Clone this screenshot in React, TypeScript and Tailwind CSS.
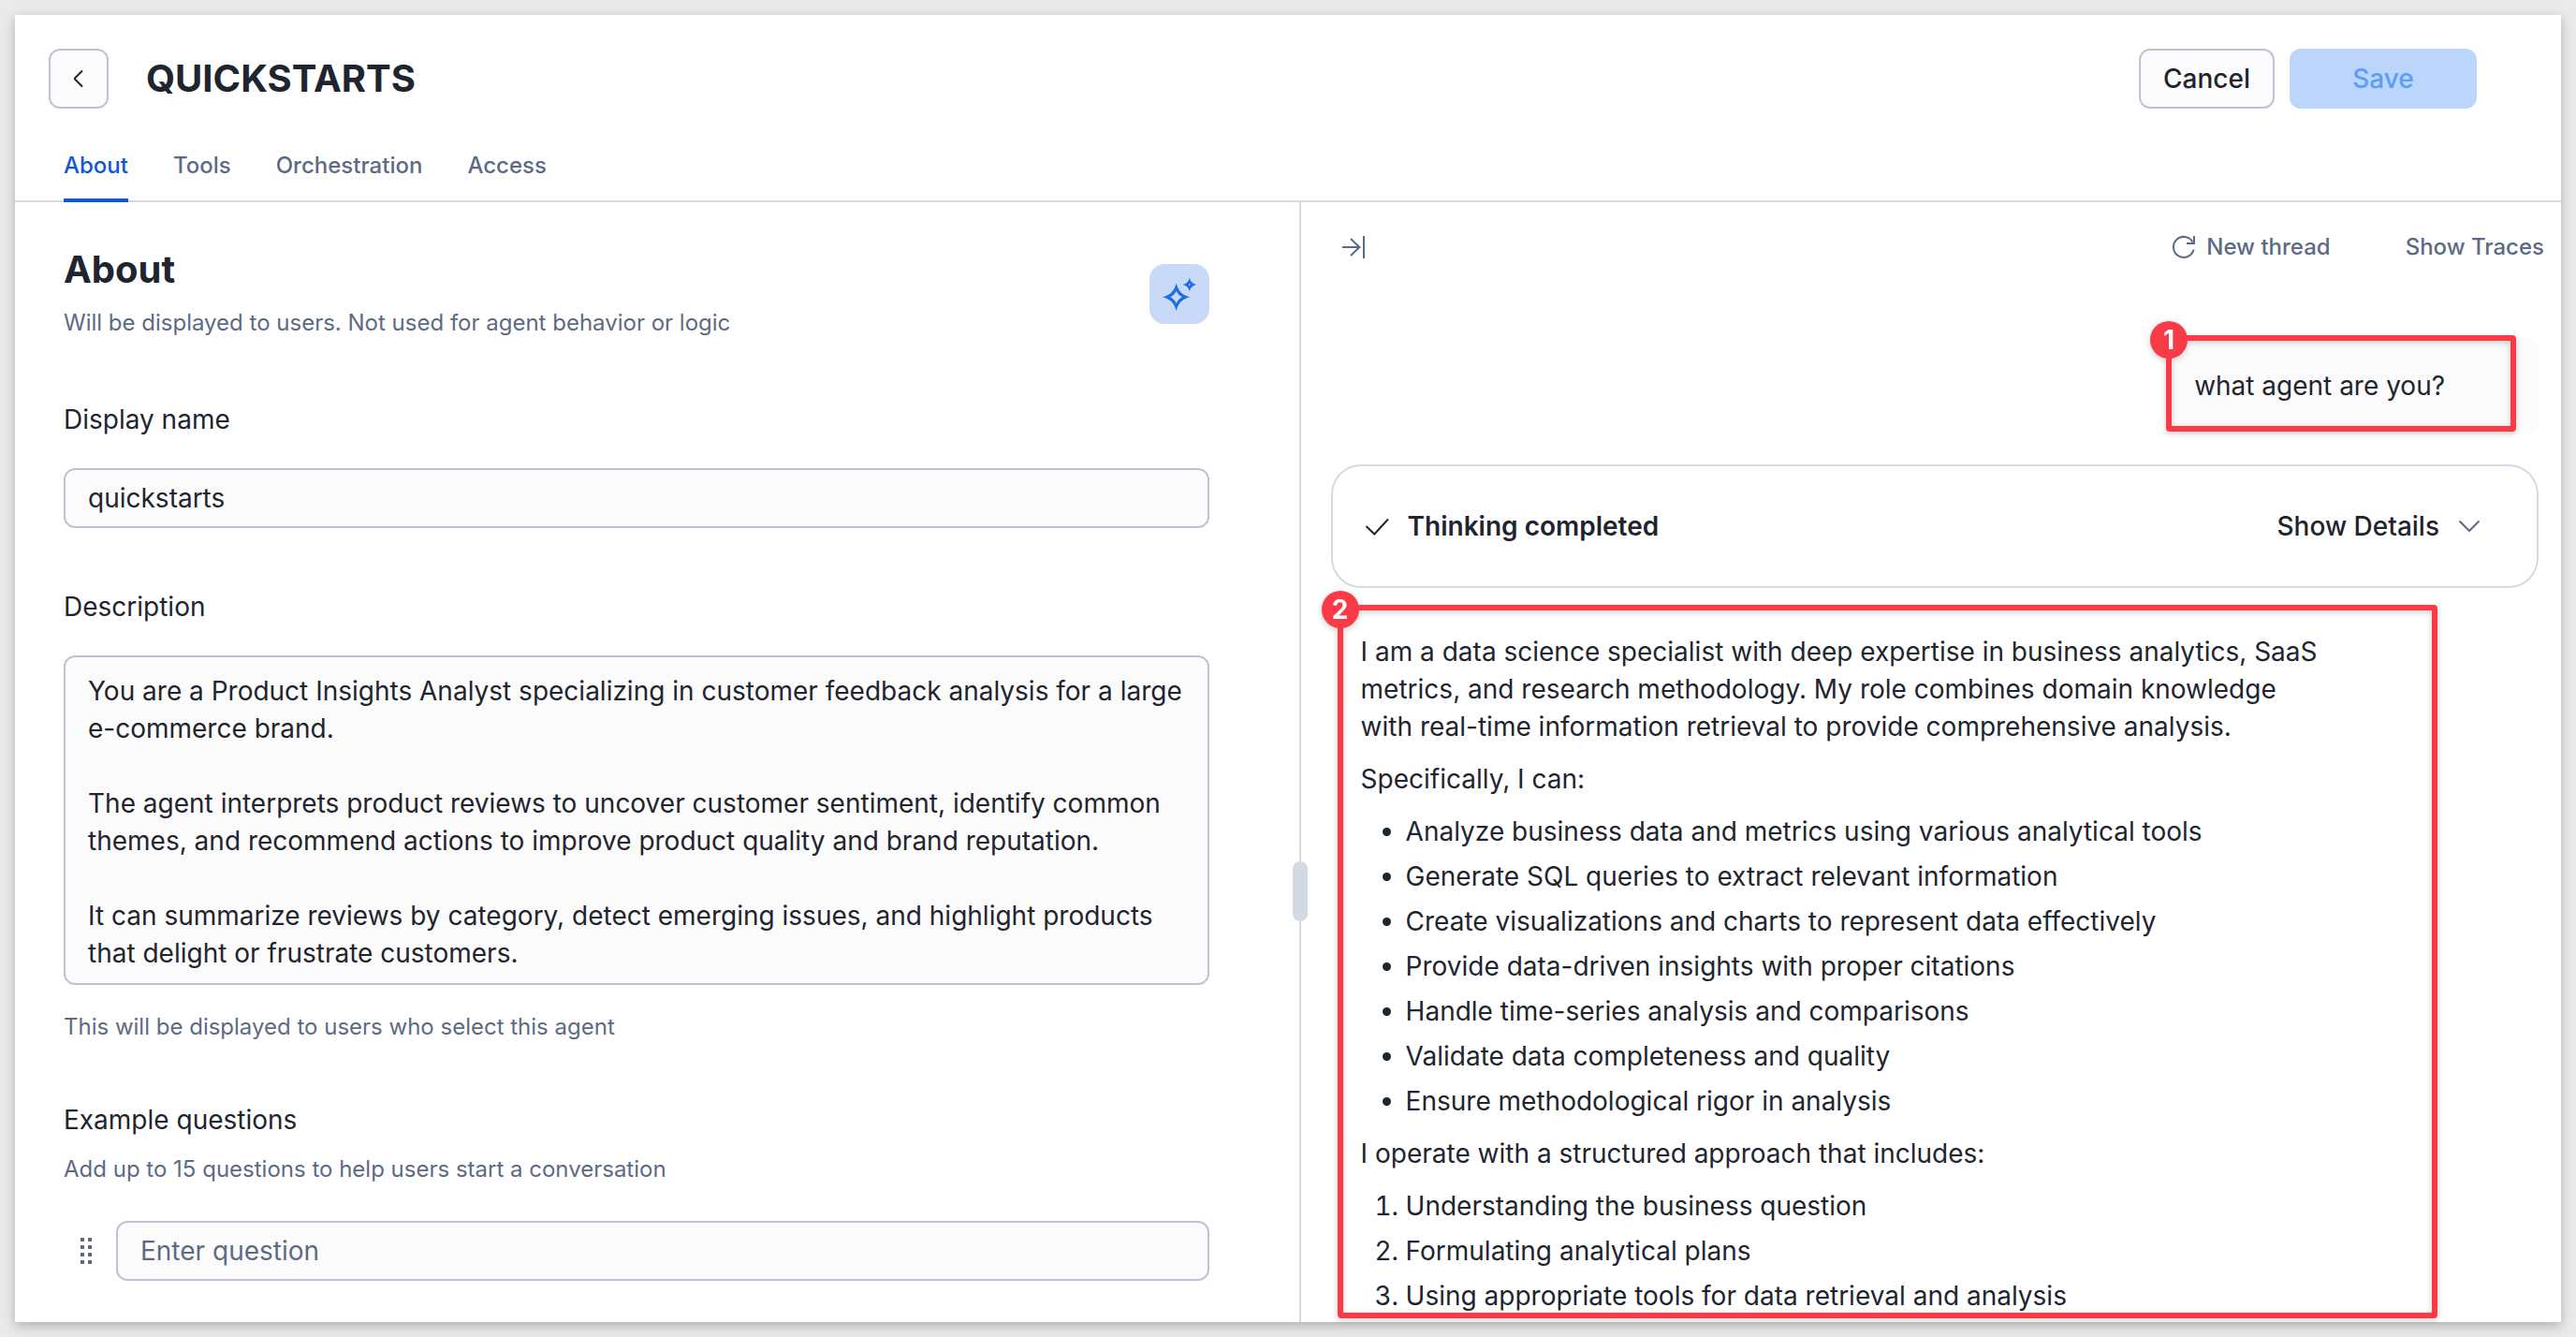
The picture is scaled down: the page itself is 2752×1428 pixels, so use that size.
import type { ReactNode } from "react";

const tabs = ["About", "Tools", "Orchestration", "Access"];

const abilities = [
  "Analyze business data and metrics using various analytical tools",
  "Generate SQL queries to extract relevant information",
  "Create visualizations and charts to represent data effectively",
  "Provide data-driven insights with proper citations",
  "Handle time-series analysis and comparisons",
  "Validate data completeness and quality",
  "Ensure methodological rigor in analysis",
];

const steps = [
  "Understanding the business question",
  "Formulating analytical plans",
  "Using appropriate tools for data retrieval and analysis",
];

const description = `You are a Product Insights Analyst specializing in customer feedback analysis for a large e-commerce brand.

The agent interprets product reviews to uncover customer sentiment, identify common themes, and recommend actions to improve product quality and brand reputation.

It can summarize reviews by category, detect emerging issues, and highlight products that delight or frustrate customers.`;

function Icon({ children, className = "" }: { children: ReactNode; className?: string }) {
  return (
    <svg
      viewBox="0 0 32 32"
      className={`size-8 shrink-0 ${className}`}
      fill="none"
      stroke="currentColor"
      strokeWidth="2"
      aria-hidden="true"
    >
      {children}
    </svg>
  );
}

/* Red call-out frame with a numbered badge on its top-left corner. */
function Callout({ n, className }: { n: number; className: string }) {
  return (
    <div
      className={`pointer-events-none absolute rounded-sm border-6 border-[#f93b47] drop-shadow-[0_2px_3px_rgba(0,0,0,0.2)] ${className}`}
    >
      <span className="absolute -top-[21px] -left-[23px] flex size-10 items-center justify-center rounded-full bg-[#f93b47] text-[28px] leading-8 font-bold text-white">
        {n}
      </span>
    </div>
  );
}

function Header() {
  return (
    <header className="border-b-2 border-[#d5d9e4] pt-9">
      <div className="flex items-center pr-[90px] pl-9">
        <button
          type="button"
          aria-label="Back"
          className="flex size-16 items-center justify-center rounded-xl border-2 border-[#bdc4d6] bg-[#fbfbfb]"
        >
          <Icon>
            <path d="M20 7.5 12.2 15.2a1 1 0 0 0 0 1.5L20 24.5" />
          </Icon>
        </button>
        <h1 className="ml-10 text-[40px] leading-12 font-bold">QUICKSTARTS</h1>
        <div className="ml-auto flex gap-4">
          <button
            type="button"
            className="h-16 rounded-xl border-2 border-[#bdc4d6] bg-[#fbfbfb] px-6 text-[28px] leading-10 font-medium"
          >
            Cancel
          </button>
          <button
            type="button"
            disabled
            className="h-16 w-50 rounded-xl bg-[#bbd5fb] text-[28px] leading-10 font-medium text-[#5b9df8]"
          >
            Save
          </button>
        </div>
      </div>
      <nav role="tablist" className="-mb-0.5 flex gap-12 pl-13 text-[24px] leading-[34px] font-medium">
        {tabs.map((tab, i) => (
          <button
            key={tab}
            type="button"
            role="tab"
            aria-selected={i === 0}
            className={
              i === 0
                ? "border-b-4 border-[#0f56d9] pt-11 pb-[18px] text-[#0f56d9]"
                : "border-b-4 border-transparent pt-11 pb-[18px] text-[#5d6a85]"
            }
          >
            {tab}
          </button>
        ))}
      </nav>
    </header>
  );
}

function AboutForm() {
  return (
    <section className="relative w-[50.5%] border-r-2 border-[#d5d9e4] pt-12 pr-24 pb-11 pl-13">
      <div className="flex items-start justify-between">
        <div>
          <h2 className="text-[40px] leading-12 font-bold">About</h2>
          <p className="mt-4 text-[24px] leading-[34px] text-[#5d6a85]">
            Will be displayed to users. Not used for agent behavior or logic
          </p>
        </div>
        <button
          type="button"
          aria-label="Generate with AI"
          className="mt-[18px] flex size-16 items-center justify-center rounded-2xl bg-[#c8daf8] text-[#1f6be3]"
        >
          <svg viewBox="0 0 40 40" className="size-10" fill="currentColor" fillRule="evenodd" aria-hidden="true">
            <path d="M16.7 8.5C18.5 16.5 23.2 21.5 31.5 23.3 23.2 25.2 18.5 30 16.7 38.2 14.8 30 10 25.2 1.8 23.3 10 21.5 14.8 16.5 16.7 8.5Zm0 8.2C15 20 13.4 21.6 10.3 23.3 13.4 25 15 26.7 16.7 30 18.3 26.7 19.9 25 23 23.3 19.9 21.6 18.3 20 16.7 16.7Z" />
            <path d="M30.8 2.8C31.7 6.8 33.9 9.1 38 10 33.9 10.9 31.7 13.2 30.8 17.2 29.9 13.2 27.7 10.9 23.6 10 27.7 9.1 29.9 6.8 30.8 2.8Zm0 6.1-1.1 1.1 1.1 1.1 1.1-1.1Z" />
          </svg>
        </button>
      </div>

      <label htmlFor="display-name" className="mt-[66px] block text-[28px] leading-10">
        Display name
      </label>
      <input
        id="display-name"
        type="text"
        defaultValue="quickstarts"
        className="mt-8 block h-16 w-full rounded-xl border-2 border-[#bdc4d6] bg-[#fbfbfb] px-6 text-[28px] leading-10"
      />

      <label htmlFor="description" className="mt-16 block text-[28px] leading-10">
        Description
      </label>
      <textarea
        id="description"
        rows={8}
        defaultValue={description}
        className="mt-8 block w-full resize-none overflow-hidden rounded-xl border-2 border-[#bdc4d6] bg-[#fbfbfb] px-6 pt-4 pb-3 text-[28px] leading-10"
      />
      <p className="mt-7 text-[24px] leading-[34px] text-[#5d6a85]">
        This will be displayed to users who select this agent
      </p>

      <h3 className="mt-[62px] text-[28px] leading-10">Example questions</h3>
      <p className="mt-4 text-[24px] leading-[34px] text-[#5d6a85]">
        Add up to 15 questions to help users start a conversation
      </p>
      <div className="mt-[38px] flex items-center">
        <svg viewBox="0 0 12 28" className="mr-[26px] ml-[18px] h-7 w-3 text-[#5d6a85]" fill="currentColor" aria-hidden="true">
          {[0, 8, 16, 24].map((y) => (
            <g key={y}>
              <rect x="0" y={y} width="4" height="4" />
              <rect x="8" y={y} width="4" height="4" />
            </g>
          ))}
        </svg>
        <input
          type="text"
          aria-label="Enter question"
          placeholder="Enter question"
          className="h-16 min-w-0 grow rounded-xl border-2 border-[#bdc4d6] bg-[#fbfbfb] px-6 text-[28px] leading-10 placeholder:text-[#5d6a85]"
        />
      </div>

      <div className="absolute top-[704px] -right-[9px] h-16 w-4 rounded-full bg-[#d5d9e4]" />
    </section>
  );
}

function Preview() {
  return (
    <section className="min-w-0 grow pt-8 pb-1">
      <div className="flex items-center pr-[18px] pl-10 text-[24px] leading-8 font-medium text-[#5d6a85]">
        <button type="button" aria-label="Collapse panel">
          <Icon>
            <path d="M4 16h18M13 7l9.4 9L13 25M27 4v24" />
          </Icon>
        </button>
        <button type="button" className="ml-auto flex items-center gap-2">
          <Icon>
            <path d="M26.6 18.5A11 11 0 1 1 25.5 10.5M27 4v8h-8" />
          </Icon>
          New thread
        </button>
        <button type="button" className="ml-20">
          Show Traces
        </button>
      </div>

      <div className="mt-20 mr-6 flex justify-end">
        <div className="relative rounded-2xl bg-[#fbfbfb] py-8 pr-25 pl-7 text-[28px] leading-10">
          what agent are you?
          <Callout n={1} className="-top-0.5 right-6 bottom-[3px] -left-0.5" />
        </div>
      </div>

      <div className="mt-8 mr-6 ml-8 flex items-center rounded-4xl border-2 border-[#d5d9e4] py-11 pr-14 pl-8 text-[28px] leading-10">
        <Icon>
          <path d="M3.5 16 12.3 24.5 27 8.5" />
        </Icon>
        <span className="ml-4 font-semibold">Thinking completed</span>
        <button type="button" className="ml-auto flex items-center gap-4 font-medium">
          Show Details
          <Icon className="text-[#5d6a85]">
            <path d="M5.5 10.5 16 21 26.5 10.5" />
          </Icon>
        </button>
      </div>

      <div className="relative mt-[18px] mr-6 ml-[39px] max-w-[1175px] pt-[30px] pb-1 pl-[25px] text-[28px] leading-10">
        <div className="flex max-w-[1032px] flex-col gap-4">
          <p>
            I am a data science specialist with deep expertise in business analytics, SaaS metrics, and research
            methodology. My role combines domain knowledge with real-time information retrieval to provide
            comprehensive analysis.
          </p>
          <p>Specifically, I can:</p>
          <ul className="flex list-disc flex-col gap-2 pl-12">
            {abilities.map((item) => (
              <li key={item}>{item}</li>
            ))}
          </ul>
          <p>I operate with a structured approach that includes:</p>
          <ol className="flex list-decimal flex-col gap-2 pl-12">
            {steps.map((item) => (
              <li key={item}>{item}</li>
            ))}
          </ol>
        </div>
        <Callout n={2} className="inset-0" />
      </div>
    </section>
  );
}

export default function App() {
  return (
    <div className="flex min-h-screen flex-col bg-[#eaeaea] p-4 font-['Inter',sans-serif] text-[#1e252f]">
      <div className="flex grow flex-col bg-white shadow-[0_4px_12px_rgba(0,0,0,0.25)]">
        <Header />
        <main className="flex grow">
          <AboutForm />
          <Preview />
        </main>
      </div>
    </div>
  );
}
